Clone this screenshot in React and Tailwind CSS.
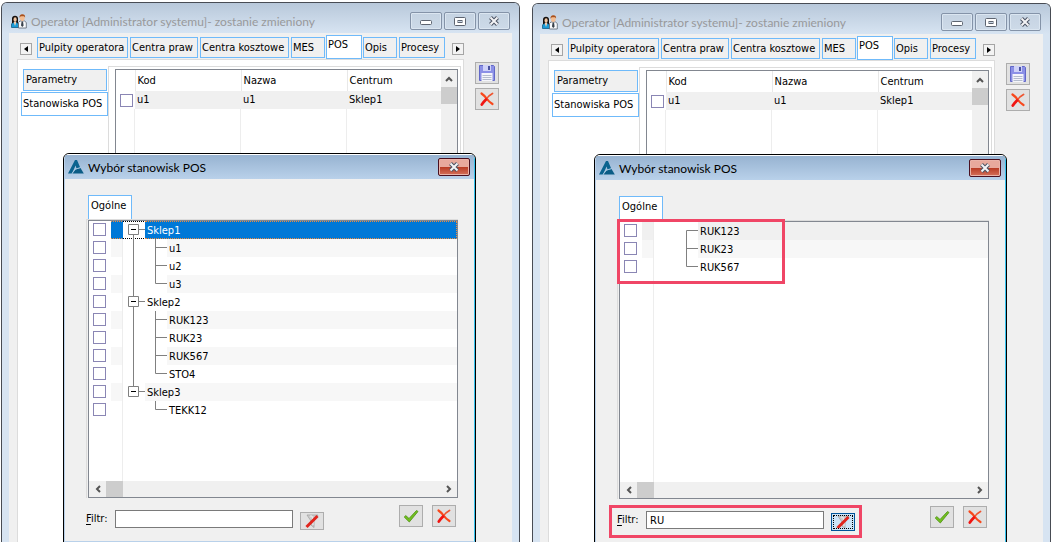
import { useState } from "react";

const tabs = [
  { name: "Pulpity operatora", width: "w-[91px]" },
  { name: "Centra praw", width: "w-[68px]" },
  { name: "Centra kosztowe", width: "w-[89px]" },
  { name: "MES", width: "w-[34px]" },
  { name: "POS", width: "w-[36px]" },
  { name: "Opis", width: "w-[34px]" },
  { name: "Procesy", width: "w-[46px]" },
];

const allRows = [
  { name: "Sklep1", parent: true, selected: true },
  { name: "u1" },
  { name: "u2" },
  { name: "u3", last: true },
  { name: "Sklep2", parent: true },
  { name: "RUK123" },
  { name: "RUK23" },
  { name: "RUK567" },
  { name: "STO4", last: true },
  { name: "Sklep3", parent: true },
  { name: "TEKK12", last: true },
];

const filteredRows = [
  { name: "RUK123", first: true },
  { name: "RUK23" },
  { name: "RUK567", last: true },
];

function PeopleIcon() {
  return (
    <svg className="w-4 h-4" viewBox="0 0 16 16">
      <path d="M.5 13.500V10L2 8.500h4L7.500 10v3.500z" fill="#1a9ad6" stroke="#125f88" strokeWidth=".8" />
      <path d="M2.600 8h2.800L4 12z" fill="#f4d0b0" />
      <path d="M1 9.500V4.500Q1.200 1.800 4 1.800T7 4.500v5L5 8H3z" fill="#16110f" />
      <ellipse cx="4.100" cy="5.600" rx="1.600" ry="2.400" fill="#f2c6a2" />
      <path d="M7.500 14V8.500L9 7h4.500L15.300 8.500V14z" fill="#f8fafc" stroke="#59636e" strokeWidth=".8" />
      <path d="M10.600 7.500H12l.6 4-1.300 1.500L10 11.500z" fill="#39424c" />
      <ellipse cx="11.300" cy="3.800" rx="2.400" ry="3.200" fill="#f2bd92" />
      <path d="M8.500 3.800Q8.200.2 11.300.2t2.800 3.400L13 2.300H9.700z" fill="#a8501c" />
    </svg>
  );
}

function LogoIcon() {
  return (
    <svg className="w-4 h-4" viewBox="0 0 16 16">
      <path d="M7 1h2l3.200 7.500L8.500 9.500 7.600 6.500 4 14.500H0z" fill="#0a638f" />
      <path d="M4.500 14.500L7.500 10.500l5-1.500 3.300 5.500z" fill="#0a5c86" />
      <path d="M3.800 14.500L7.200 10.200l5.300-1.700" fill="none" stroke="#a5c6df" strokeWidth=".8" />
    </svg>
  );
}

function DeleteIcon() {
  return (
    <svg className="w-4 h-4" viewBox="0 0 16 16" fill="none" strokeLinecap="round">
      <path d="M2.500 2.500Q6 5 8 8t5.500 5" stroke="#f8481c" strokeWidth="2.200" />
      <path d="M13.500 2.500Q9.500 4.500 7 8.500" stroke="#ee5530" strokeWidth="1.800" />
      <path d="M7 8.500Q4.500 11 2.800 13.500" stroke="#f01512" strokeWidth="2.800" />
    </svg>
  );
}

function SaveIcon() {
  return (
    <svg className="w-[18px] h-[18px]" viewBox="0 0 18 18">
      <path d="M1.500 1.500h14l1 1v14h-15z" fill="#8b90e6" stroke="#6268c8" />
      <path d="M5 1h8v6H5z" fill="#cfd2f8" />
      <path d="M10 2h2v4h-2z" fill="#4a52a0" />
      <path d="M3.500 9h11v8h-11z" fill="#f4f5fb" />
      <path d="M4.500 11.500h9M4.500 13.500h9M4.500 15.500h9" stroke="#b4bccd" />
    </svg>
  );
}

function CheckIcon() {
  return (
    <svg className="w-4 h-4" viewBox="0 0 16 16">
      <path d="M1.200 9l1.600-1.400L6 10.500 13.500 2.500l1.500 1L6.300 14z" fill="#72c01f" stroke="#4c8f12" strokeWidth=".8" />
    </svg>
  );
}

function FilterIcon() {
  return (
    <svg className="w-4 h-4" viewBox="0 0 16 16">
      <path d="M3 2h11L10 8v6.500L7 12V8z" fill="#cdcdcd" stroke="#a2a2a2" strokeWidth=".8" />
      <path d="M6 3h2l1 5v4" fill="none" stroke="#efefef" />
      <path d="M2.500 14L13.500 3" stroke="#e0251d" strokeWidth="3" />
    </svg>
  );
}

function CloseGlyph() {
  return (
    <svg className="w-3 h-[10px]" viewBox="0 0 12 10" fill="none">
      <path d="M2.500 1.500l7 7M9.500 1.500l-7 7" stroke="#4d5564" strokeWidth="4" />
      <path d="M2.500 1.500l7 7M9.500 1.500l-7 7" stroke="#f4f4f6" strokeWidth="2" />
    </svg>
  );
}

function Chevron({ d }) {
  return (
    <svg className="w-2 h-2" viewBox="0 0 8 8" fill="none">
      <path d={d} stroke="#555" strokeWidth="2" />
    </svg>
  );
}

function WindowButton({ label, children }) {
  return (
    <button
      aria-label={label}
      className="w-8 h-[18px] flex items-center justify-center border border-[#8493a8] rounded-[2px] bg-linear-to-b from-[#c5d3e2] to-[#cddae8] shadow-[inset_0_0_0_1px_#dbe6f1]"
    >
      {children}
    </button>
  );
}

function ToolButton({ label, children }) {
  return (
    <button aria-label={label} className="w-6 h-[22px] flex items-center justify-center border border-[#adadad] bg-[#e1e1e1]">
      {children}
    </button>
  );
}

function ArrowButton({ label, d }) {
  return (
    <button aria-label={label} className="w-3 h-3 mb-1 flex items-center justify-center border border-[#a5a5a5] bg-[#f3f3f3]">
      <svg className="w-[6px] h-[6px]" viewBox="0 0 6 6">
        <path d={d} fill="#000" />
      </svg>
    </button>
  );
}

function CheckBox({ label }) {
  return (
    <input
      type="checkbox"
      aria-label={label}
      className="appearance-none block w-[13px] h-[13px] border border-[#8a86b4] bg-white checked:bg-[#8a86b4]"
    />
  );
}

function StationsTable() {
  return (
    <div className="flex-1 flex border border-[#828790] bg-white">
      <div className="flex-1 flex flex-col">
        <table className="w-full table-fixed border-collapse text-left">
          <thead>
            <tr className="h-[21px]">
              <th className="w-[19px] border-r border-[#e8e8e8]" aria-label="Zaznacz"></th>
              <th className="w-[106px] pl-[2px] font-normal border-r border-[#e8e8e8]">Kod</th>
              <th className="w-[106px] pl-[2px] font-normal border-r border-[#e8e8e8]">Nazwa</th>
              <th className="pl-[2px] font-normal">Centrum</th>
            </tr>
          </thead>
          <tbody>
            <tr className="h-[18px] bg-[#f0f0f0]">
              <td className="pl-1 bg-white"><CheckBox label="u1" /></td>
              <td className="pl-[2px]">u1</td>
              <td className="pl-[2px]">u1</td>
              <td className="pl-[2px]">Sklep1</td>
            </tr>
          </tbody>
        </table>
        <div className="flex-1 flex">
          <div className="w-[19px] border-r border-[#ededed]" />
          <div className="w-[106px] border-r border-[#ededed]" />
          <div className="w-[106px] border-r border-[#ededed]" />
        </div>
      </div>
      <div className="w-4 bg-[#f0f0f0]">
        <div className="h-[17px] flex items-center justify-center">
          <Chevron d="M1 6l3-3 3 3" />
        </div>
        <div className="h-[17px] bg-[#cdcdcd]" />
      </div>
    </div>
  );
}

function TreeRow({ row, index, filtered }) {
  let stripe = index % 2 === 1 ? "bg-[#f7f7f7]" : "bg-white";
  if (row.selected) stripe = "bg-[#0078d7] text-white";
  if (row.first) stripe = "bg-[#f0f0f0]";
  const focus = row.selected ? "border-y border-dotted border-[#f08c3c]" : "";

  return (
    <li className="h-[18px] flex">
      <div className="w-[22px] pl-1 pt-[2px]">
        <CheckBox label={row.name} />
      </div>
      <div className={`w-[11px] ${stripe} ${focus}`} />
      <div className={`w-px ${row.selected ? "bg-[#0078d7]" : "bg-[#ededed]"}`} />
      <svg
        className={row.parent ? "w-[22px] h-[18px]" : "w-[44px] h-[18px]"}
        viewBox={row.parent ? "0 0 22 18" : "0 0 44 18"}
        fill="none"
        stroke="#808080"
      >
        {row.parent && row.selected && <path d="M0 .5h22M0 17.500h22" stroke="#000" strokeDasharray="1 1" />}
        {row.parent && <path d={index === 0 ? "M10.500 14v4" : index === 9 ? "M10.500 0v4" : "M10.500 0v4M10.500 14v4"} />}
        {row.parent && <path d="M5.500 3.500h10v10h-10zM16 8.500h6" />}
        {row.parent && <path d="M8 8.500h5" stroke="#000" />}
        {!row.parent && !filtered && index < 9 && <path d="M10.500 0v18" />}
        {!row.parent && <path d={row.last ? "M32.500 0v8.500H44" : row.first ? "M32.500 18V8.500H44" : "M32.500 0v18M32.500 8.500H44"} />}
      </svg>
      <div
        className={`flex-1 pl-[2px] leading-4 ${stripe} ${row.selected ? "pt-px border border-l-0 border-dotted border-[#f08c3c]" : "pt-[2px]"}`}
      >
        {row.name}
      </div>
    </li>
  );
}

function StationDialog({ id, rows, initialFilter, marked }) {
  const [filter, setFilter] = useState(initialFilter);

  return (
    <section className="absolute left-[61px] right-[43px] top-[150px] rounded-t-[6px] border border-black bg-[#f0f0f0] overflow-hidden">
      <div className="border border-[#b9d1ea] border-r-[#35c3ee] border-t-white rounded-t-[5px]">
        <header className="h-6 pl-[3px] pr-1 flex items-center bg-linear-to-b from-[#97b3d1] to-[#b9d1ea]">
          <LogoIcon />
          <h2 className="flex-1 pl-1 pt-[2px] font-['Lato',sans-serif] text-[12px] leading-4 text-black">Wybór stanowisk POS</h2>
          <button
            aria-label="Zamknij"
            className="w-8 h-[18px] flex items-center justify-center rounded-[2px] border border-[#4a1020] bg-linear-to-b from-[#e8a99c] from-50% to-[#d4705a] via-[#b83a22] via-50% shadow-[inset_0_0_0_1px_#eab3a8]"
          >
            <CloseGlyph />
          </button>
        </header>

        <div className="pl-[21px] pr-[16px] pt-4 pb-[11px]">
          <div role="tablist" className="flex pl-[2px]">
            <button role="tab" aria-selected="true" className="w-11 h-6 pl-[2px] pb-1 text-left border border-b-0 border-[#6fbafa] bg-white">
              Ogólne
            </button>
          </div>
          <div className="border-l border-t border-[#dcdcdc] pl-px">
            <div className="h-[278px] flex flex-col border border-[#828790] bg-white">
              <ul>
                {rows.map((row, index) => (
                  <TreeRow key={row.name} row={row} index={index} filtered={marked} />
                ))}
              </ul>
              <div className="flex-1 ml-[33px] border-l border-[#ededed]" />
              <div className="h-4 flex items-center bg-[#f0f0f0]">
                <div className="w-[17px] flex justify-center"><Chevron d="M6 1L3 4l3 3" /></div>
                <div className="w-[17px] h-4 bg-[#cdcdcd]" />
                <div className="flex-1" />
                <div className="w-[17px] flex justify-center"><Chevron d="M2 1l3 3-3 3" /></div>
              </div>
            </div>
          </div>

          <div className="mt-[6px] flex items-center">
            <label htmlFor={id} className="w-[29px] mt-1">
              <span className="underline underline-offset-2">F</span>iltr:
            </label>
            <input
              id={id}
              value={filter}
              onChange={(e) => setFilter(e.target.value)}
              className="w-[178px] h-[18px] mt-1 px-[3px] border border-[#7a7a7a] bg-white outline-none"
            />
            <button
              aria-label="Filtruj"
              className={`w-6 h-[18px] ml-[7px] mt-2 flex items-center justify-center border ${
                marked
                  ? "border-[#005499] bg-[#cce4f7] outline-1 outline-dotted outline-black -outline-offset-3"
                  : "border-[#adadad] bg-[#e1e1e1]"
              }`}
            >
              <FilterIcon />
            </button>
            <div className="flex-1 self-start pt-px pr-[2px] flex justify-end gap-[9px]">
              <ToolButton label="Zatwierdź"><CheckIcon /></ToolButton>
              <ToolButton label="Anuluj"><DeleteIcon /></ToolButton>
            </div>
          </div>
        </div>
      </div>

      {marked && (
        <>
          <div className="absolute left-[22px] top-16 w-[168px] h-[65px] border-3 border-[#f04666] pointer-events-none" />
          <div className="absolute left-[14px] top-[350px] w-[253px] h-[33px] border-3 border-[#f04666] pointer-events-none" />
        </>
      )}
    </section>
  );
}

function OperatorWindow({ children }) {
  return (
    <main className="relative flex-1 flex flex-col border border-b-0 border-[#484c54] rounded-t-[6px] bg-[#d7e4f2]">
      <header className="h-[30px] px-[9px] pt-2 flex items-center rounded-t-[5px] bg-linear-to-b from-[#b8c8da] to-[#d7e4f2]">
        <PeopleIcon />
        <h1 className="flex-1 pl-1 font-['Lato',sans-serif] text-[12px] leading-4 text-[#98999b]">
          Operator [Administrator systemu]- zostanie zmieniony
        </h1>
        <div className="flex gap-[2px] pb-[2px]">
          <WindowButton label="Minimalizuj">
            <svg className="w-3 h-2" viewBox="0 0 12 8">
              <rect x=".5" y="3.500" width="11" height="4" rx="1" fill="#fff" stroke="#5d6470" />
            </svg>
          </WindowButton>
          <WindowButton label="Maksymalizuj">
            <svg className="w-3 h-[9px]" viewBox="0 0 12 9" stroke="#5d6470">
              <rect x=".5" y=".5" width="11" height="8" rx="1" fill="#fff" />
              <rect x="4" y="3.500" width="4" height="2" fill="#cbd8e6" />
            </svg>
          </WindowButton>
          <WindowButton label="Zamknij">
            <CloseGlyph />
          </WindowButton>
        </div>
      </header>

      <div className="flex-1 mx-[7px] pl-2 pt-[2px] flex bg-[#f0f0f0]">
        <div className="flex-1 flex flex-col">
          <div role="tablist" className="h-6 pl-[3px] flex items-end gap-[2px] whitespace-nowrap">
            <ArrowButton label="Poprzednie" d="M5 0v6L1 3z" />
            <div className="flex-1 pl-[3px] flex items-end gap-[2px]">
              {tabs.map((tab) => (
                <button
                  key={tab.name}
                  role="tab"
                  aria-selected={tab.name === "POS"}
                  className={`${tab.width} pl-px text-left border border-[#6fbafa] ${
                    tab.name === "POS" ? "h-6 -mx-px pb-1 bg-white" : "h-[21px] mb-px bg-[#f0f0f0]"
                  }`}
                >
                  {tab.name}
                </button>
              ))}
            </div>
            <ArrowButton label="Następne" d="M1 0v6l4-3z" />
          </div>

          <div className="flex-1 flex pt-[6px] pr-[2px] border border-[#dcdcdc] border-b-0 bg-white">
            <div className="w-[90px] pl-[3px] pt-[3px] flex flex-col items-end gap-px">
              <button className="w-[84px] h-[22px] mr-px pl-[2px] text-left border border-[#6fbafa] bg-[#f0f0f0]">Parametry</button>
              <button className="w-[87px] h-6 pl-px text-left border border-[#6fbafa] bg-white">Stanowiska POS</button>
            </div>
            <div className="flex-1 flex pl-[6px] pr-[2px] pt-[2px] border border-[#dcdcdc] border-b-0">
              <StationsTable />
            </div>
          </div>
        </div>

        <div className="w-12 pt-[27px] pl-[11px] flex flex-col gap-1">
          <ToolButton label="Zapisz"><SaveIcon /></ToolButton>
          <ToolButton label="Usuń"><DeleteIcon /></ToolButton>
        </div>
      </div>

      {children}
    </main>
  );
}

export default function App() {
  return (
    <div className="h-screen pl-px flex gap-3 overflow-hidden bg-white font-['DejaVu_Sans_Condensed','DejaVu_Sans',sans-serif] text-[11px] leading-4 text-black">
      <div className="flex-1 pt-[2px] flex">
        <OperatorWindow>
          <StationDialog id="filter-all" rows={allRows} initialFilter="" />
        </OperatorWindow>
      </div>
      <div className="flex-1 pt-[3px] flex">
        <OperatorWindow>
          <StationDialog id="filter-ru" rows={filteredRows} initialFilter="RU" marked />
        </OperatorWindow>
      </div>
    </div>
  );
}
